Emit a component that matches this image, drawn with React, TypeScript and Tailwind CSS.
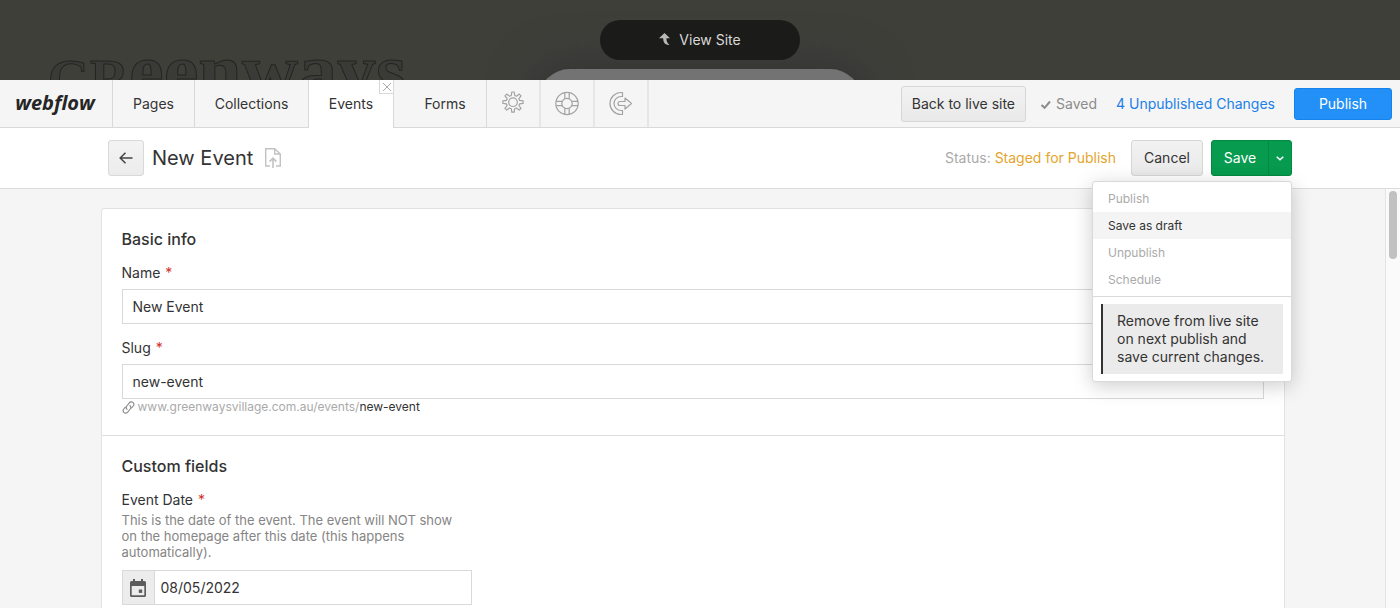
import clsx from "clsx";
import type { ReactNode } from "react";

const tabs = [
  { label: "Pages", width: "w-[82px]" },
  { label: "Collections", width: "w-[114px]" },
  { label: "Events", width: "w-[85px]", active: true },
  { label: "Forms", width: "w-[93px]" },
];

const menuItems = [
  { label: "Publish", enabled: false },
  { label: "Save as draft", enabled: true },
  { label: "Unpublish", enabled: false },
  { label: "Schedule", enabled: false },
];

const GearIcon = () => (
  <svg width="26" height="26" viewBox="0 0 26 26" fill="none" stroke="currentColor" strokeWidth="1.2" strokeLinejoin="round">
    <path d="M11.300 4.500 11.800 1h2.400l.5 3.500 1.700.7 2.900-2.100 1.700 1.700-2.100 2.900.7 1.700 3.500.5v2.400l-3.500.5-.7 1.700 2.100 2.900-1.700 1.700-2.900-2.100-1.700.7-.5 3.500h-2.400l-.5-3.500-1.700-.7-2.900 2.100L5 17.400l2.100-2.900-.7-1.700-3.500-.5V9.900l3.500-.5.7-1.700L5 4.800l1.700-1.700 2.900 2.100z" />
    <circle cx="13" cy="11.200" r="4.300" />
  </svg>
);

const HelpIcon = () => (
  <svg width="26" height="26" viewBox="0 0 26 26" fill="none" stroke="currentColor" strokeWidth="1.2">
    <circle cx="13" cy="12.500" r="11.200" />
    <circle cx="13" cy="12.500" r="5.200" />
    <path d="M10.800 1.500v6.400M15.200 1.500v6.400M10.800 17.100v6.400M15.200 17.100v6.400M2 10.300h6.400M2 14.700h6.400M17.600 10.300H24M17.600 14.700H24" />
  </svg>
);

const LogoutIcon = () => (
  <svg width="26" height="26" viewBox="0 0 26 26" fill="none" stroke="currentColor" strokeWidth="1.2" strokeLinejoin="round">
    <path d="M14.500 1.500H13a11 11 0 0 0 0 22h1.500v-4H13a7 7 0 0 1 0-14h1.500z" />
    <path d="M12 10.500h5V7l6.500 5.500L17 18v-3.500h-5a2 2 0 0 1 0-4z" />
  </svg>
);

const DocUploadIcon = () => (
  <svg width="16" height="20" viewBox="0 0 16 20" fill="none" stroke="currentColor" strokeWidth="1.4">
    <path d="M5 18H.7V.7h9L15.3 6v12H11M9.7.7V6h5.6" />
    <path d="M8 20v-9.500M4.600 13.600 8 10.200l3.400 3.400" strokeWidth="1.600" />
  </svg>
);

const LinkIcon = () => (
  <svg width="13" height="13" viewBox="0 0 13 13" fill="none" stroke="currentColor" strokeWidth="1.1" strokeLinecap="round">
    <path d="M5 8.300C4 7.500 4 6 4.800 5l2.500-3.200c.9-1.100 2.500-1.300 3.600-.4s1.200 2.500.3 3.600L9.700 6.900" />
    <path d="M8 4.700c1 .8 1 2.300.2 3.300l-2.500 3.200c-.9 1.100-2.500 1.300-3.600.4S.9 9.100 1.800 8l1.500-1.900" />
  </svg>
);

const Required = () => <span className="ml-px text-[#d0342c]">*</span>;

const SiteHeader = () => (
  <header className="relative flex h-20 shrink-0 justify-center overflow-hidden bg-[#3f3f3a] pt-5">
    <div className="absolute top-[46px] left-12 font-['Liberation_Serif',serif] text-[54px] leading-[50px] font-bold whitespace-nowrap text-[#3a3a36] [-webkit-text-stroke:1px_#242421]">
      G<span className="uppercase">r</span>
      <span className="text-[78px]">eenways</span>
    </div>
    <div className="absolute top-[69px] left-1/2 h-16 w-[324px] -translate-x-1/2 rounded-[32px] bg-[#737373] shadow-[0_0_36px_14px_#373737]" />
    <button className="relative flex h-10 w-[200px] items-center justify-center gap-2 rounded-full bg-[#1b1b19] text-sm text-[#d8d8d6]">
      <svg width="12" height="14" viewBox="0 0 12 14" fill="#b9b9b7">
        <path d="M5.500 0 11 5.300H7.500c-.2 3 .8 5 3 6.700-3.800.3-6.500-2.200-6.300-6.700H0z" />
      </svg>
      View Site
    </button>
  </header>
);

const IconLink = ({ label, children }: { label: string; children: ReactNode }) => (
  <a
    href="#"
    aria-label={label}
    className="flex w-[54px] items-center justify-center border-r-2 border-[#e6e6e6] text-[#a3a3a3]"
  >
    {children}
  </a>
);

const EditorBar = () => (
  <div className="flex h-12 shrink-0 bg-[#f5f5f5]">
    <nav className="flex">
      <a
        href="#"
        className="flex w-[113px] items-center justify-center border-r border-b border-[#d9d9d9] pr-[2px] pb-[2px] font-['Open_Sans',sans-serif] text-xl font-bold text-[#262626] italic"
      >
        webflow
      </a>
      {tabs.map((tab) => (
        <div
          key={tab.label}
          className={clsx(
            "relative flex border-r border-[#d9d9d9]",
            tab.width,
            tab.active ? "bg-white" : "border-b",
            tab.label === "Forms" && "pl-[10px]"
          )}
        >
          <a
            href="#"
            className={clsx("flex flex-1 items-center justify-center", tab.active && "pb-px")}
          >
            {tab.label}
          </a>
          {tab.active && (
            <button
              aria-label="Close tab"
              className="absolute top-0 right-0 flex size-[14px] items-center justify-center border-b border-l border-[#d9d9d9] text-[#aaa]"
            >
              <svg width="8" height="8" viewBox="0 0 8 8" stroke="currentColor" strokeWidth="1">
                <path d="M0 0l8 8M8 0 0 8" />
              </svg>
            </button>
          )}
        </div>
      ))}
      <div className="flex border-b border-[#d9d9d9]">
        <IconLink label="Settings">
          <GearIcon />
        </IconLink>
        <IconLink label="Help">
          <HelpIcon />
        </IconLink>
        <IconLink label="Log out">
          <LogoutIcon />
        </IconLink>
      </div>
    </nav>
    <div className="flex flex-1 items-center justify-end border-b border-[#d9d9d9] pr-2">
      <button className="h-9 rounded-[3px] border border-[#d6d6d6] bg-linear-to-b from-[#f2f2f2] to-[#e9e9e9] px-[10px]">
        Back to live site
      </button>
      <span className="ml-[14px] flex items-center gap-1 pt-px text-[#8c8c8c]">
        <svg width="12" height="12" viewBox="0 0 12 12" fill="none" stroke="currentColor" strokeWidth="2">
          <path d="M1.500 7 4.600 9.800 10 3.500" />
        </svg>
        Saved
      </span>
      <a href="#" className="ml-[19px] text-[#1a7fe8]">
        4 Unpublished Changes
      </a>
      <button className="ml-[19px] h-8 w-[98px] rounded-[3px] border border-[#1683ec] bg-[#2290f7] text-white">
        Publish
      </button>
    </div>
  </div>
);

const SaveMenu = () => (
  <div className="absolute -right-px top-full z-10 mt-[6px] w-[200px] rounded-[3px] border border-[#d9d9d9] bg-white text-[#333] shadow-[0_4px_20px_rgba(0,0,0,0.2)]">
    <div className="flex flex-col border-b border-[#d9d9d9] py-[3px] text-xs">
      {menuItems.map((item) => (
        <button
          key={item.label}
          disabled={!item.enabled}
          className={clsx(
            "h-[27px] px-[15px] text-left",
            item.enabled ? "bg-[#f4f4f4] text-[#333]" : "text-[#aaa]"
          )}
        >
          {item.label}
        </button>
      ))}
    </div>
    <p className="mx-2 my-[7px] border-l-2 border-[#333] bg-[#ebebeb] py-2 pr-4 pl-[14px] leading-[18px]">
      Remove from live site on next publish and save current changes.
    </p>
  </div>
);

const ItemHeader = () => (
  <div className="flex h-[61px] shrink-0 justify-center border-b border-[#dcdcdc] bg-white">
    <div className="flex w-full max-w-[1184px] items-center">
      <button
        aria-label="Back"
        className="flex size-9 items-center justify-center rounded-[3px] border border-[#d9d9d9] bg-linear-to-b from-[#f3f3f3] to-[#ececec]"
      >
        <svg width="14" height="12" viewBox="0 0 14 12" fill="none" stroke="#444" strokeWidth="1.500">
          <path d="M13.500 6H1.500M6.500.7 1.200 6l5.300 5.300" />
        </svg>
      </button>
      <h1 className="ml-2 text-xl">New Event</h1>
      <span className="ml-3 text-[#c2c2c2]">
        <DocUploadIcon />
      </span>
      <p className="ml-auto text-[#aaa]">
        Status: <span className="text-[#e5a42c]">Staged for Publish</span>
      </p>
      <button className="ml-[15px] h-9 w-[72px] rounded-[3px] border border-[#d6d6d6] bg-linear-to-b from-[#f2f2f2] to-[#e9e9e9]">
        Cancel
      </button>
      <div className="relative ml-2 flex h-9 rounded-[3px] border border-[#00893f] bg-[#069b4e] text-white">
        <button className="w-14">Save</button>
        <button
          aria-label="More save options"
          className="flex w-[23px] items-center justify-center border-l border-[#00893f]"
        >
          <svg width="8" height="5" viewBox="0 0 8 5" fill="none" stroke="currentColor" strokeWidth="1.500">
            <path d="M.7.7 4 3.800 7.300.7" />
          </svg>
        </button>
        <SaveMenu />
      </div>
    </div>
  </div>
);

const inputClass =
  "h-[35px] w-full border border-[#d9d9d9] bg-white px-[10px] text-sm text-[#333] outline-none";

const ItemForm = () => (
  <form className="w-full max-w-[1184px] self-start rounded-[3px] border border-[#e2e2e2] bg-white">
    <section className="border-b border-[#dedede] p-5">
      <h2 className="text-base leading-5 font-medium">Basic info</h2>
      <label htmlFor="name" className="mt-[14px] mb-[6px] block">
        Name <Required />
      </label>
      <input id="name" defaultValue="New Event" className={clsx(inputClass, "block")} />
      <label htmlFor="slug" className="mt-[14px] mb-[6px] block">
        Slug <Required />
      </label>
      <input id="slug" defaultValue="new-event" className={clsx(inputClass, "block")} />
      <p className="flex items-center text-xs leading-4 text-[#aaa]">
        <span className="mr-[3px] text-[#888]">
          <LinkIcon />
        </span>
        www.greenwaysvillage.com.au/events/
        <span className="text-[#333]">new-event</span>
      </p>
    </section>
    <section className="p-5">
      <h2 className="text-base leading-5 font-medium">Custom fields</h2>
      <label htmlFor="date" className="mt-[14px] block">
        Event Date <Required />
      </label>
      <p className="mt-[2px] max-w-[340px] text-[13px] leading-4 text-[#858585]">
        This is the date of the event. The event will NOT show on the homepage
        after this date (this happens automatically).
      </p>
      <div className="mt-[10px] flex w-[350px]">
        <span className="flex w-8 shrink-0 items-center justify-center border border-r-0 border-[#d9d9d9] bg-[#ececec]">
          <svg width="16" height="18" viewBox="0 0 16 18" fill="#5c5c5c">
            <path fillRule="evenodd" d="M3 0h2v2h6V0h2v2h1.500A1.500 1.500 0 0 1 16 3.500v13a1.500 1.500 0 0 1-1.500 1.500h-13A1.500 1.500 0 0 1 0 16.500v-13A1.500 1.500 0 0 1 1.500 2H3zM1.700 7v9.300h12.600V7z" />
            <path d="M8.800 10.500h3.400v3.400H8.800z" />
          </svg>
        </span>
        <input id="date" defaultValue="08/05/2022" className={clsx(inputClass, "pl-[6px]")} />
      </div>
    </section>
  </form>
);

export default function App() {
  return (
    <div className="flex h-screen flex-col overflow-hidden bg-[#f5f5f5] font-['Inter',sans-serif] text-sm text-[#333]">
      <SiteHeader />
      <EditorBar />
      <ItemHeader />
      <main className="flex min-h-0 flex-1">
        <div className="flex flex-1 justify-center overflow-hidden pt-[19px]">
          <ItemForm />
        </div>
        <div className="w-[15px] shrink-0 border-l border-[#e4e4e4] bg-[#fafafa] px-[3px] pt-[2px]">
          <div className="h-[68px] w-2 rounded-full bg-[#c1c1c1]" />
        </div>
      </main>
    </div>
  );
}
